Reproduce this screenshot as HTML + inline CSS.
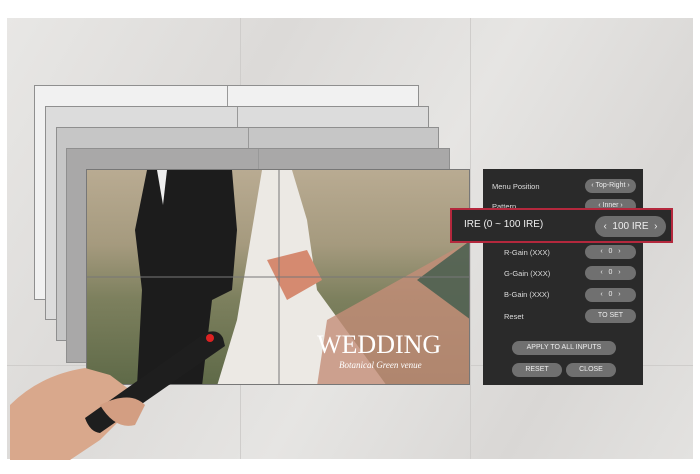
<!DOCTYPE html>
<html><head><style>
*{margin:0;padding:0;box-sizing:border-box}
body{width:700px;height:474px;background:#fff;position:relative;overflow:hidden;font-family:"Liberation Sans",sans-serif}
.bg{position:absolute;left:7px;top:18px;width:686px;height:441px;background:linear-gradient(120deg,#e8e7e5 0%,#dcdad8 30%,#e6e5e3 55%,#d9d7d5 80%,#e3e2e0 100%)}
.ln{position:absolute;background:#cfcdcb}
.p{position:absolute;border:1px solid #8f8f8f}
.p:after{content:"";position:absolute;left:50%;top:0;bottom:0;border-left:1px solid #999}
.photo{position:absolute;left:86px;top:169px;width:384px;height:216px;overflow:hidden;background:linear-gradient(180deg,#b9ab92 0%,#a59a7e 35%,#7d805e 60%,#5f6a48 100%);border:1px solid #777}
.menu{position:absolute;left:483px;top:169px;width:160px;height:216px;background:#2a2a2a;color:#ddd;font-size:7.5px}
.lab{position:absolute;left:9px}
.btn{position:absolute;left:102px;width:51px;height:14px;border-radius:7px;background:#707070;color:#eee;font-size:7px;text-align:center;line-height:14px}
.hl{position:absolute;left:450px;top:208px;width:223px;height:35px;border:2px solid #b4283d;background:#2a2a2a;color:#eee}
</style></head><body>
<div class="bg"></div>
<div class="ln" style="left:240px;top:18px;width:1px;height:441px"></div>
<div class="ln" style="left:470px;top:18px;width:1px;height:441px"></div>
<div class="ln" style="left:7px;top:365px;width:686px;height:1px"></div>
<div class="p" style="left:34px;top:85px;width:385px;height:215px;background:#f1f1f1"></div>
<div class="p" style="left:45px;top:106px;width:384px;height:214px;background:#dcdcdc"></div>
<div class="p" style="left:56px;top:127px;width:383px;height:214px;background:#c6c6c6"></div>
<div class="p" style="left:66px;top:148px;width:384px;height:215px;background:#a9a8a8"></div>
<div class="photo">
<svg width="384" height="216" style="position:absolute;left:0;top:0">
<path d="M60 0 L145 0 L150 60 L145 120 L125 130 L115 216 L50 216 L55 120 L48 60 Z" fill="#1c1c1c"/>
<path d="M70 0 L80 0 L76 35 Z" fill="#eee"/>
<path d="M175 0 L205 0 L220 50 L230 120 L300 216 L130 216 L150 150 L165 60 Z" fill="#ece9e4"/>
<path d="M180 90 L220 80 L235 110 L200 130 Z" fill="#d58a70"/>
<path d="M384 70 L384 216 L230 216 L240 150 Z" fill="#c48d78" opacity=".8"/>
<path d="M384 70 L384 150 L330 110 Z" fill="#3f5b4c" opacity=".8"/>
<line x1="192" y1="0" x2="192" y2="216" stroke="#777" stroke-width="1"/>
<line x1="0" y1="107" x2="384" y2="107" stroke="#777" stroke-width="1"/>
<text x="230" y="183" font-family="Liberation Serif" font-size="26" fill="#fff">WEDDING</text>
<text x="252" y="198" font-family="Liberation Serif" font-style="italic" font-size="9" fill="#fff">Botanical Green venue</text>
</svg></div>
<svg width="240" height="144" style="position:absolute;left:0;top:330px">
<path d="M10 130 L10 75 Q40 45 85 38 L110 45 L130 60 L140 70 L100 110 L70 130 Z" fill="#d9a88c"/>
<path d="M85 88 L205 3 Q218 -2 223 8 L225 16 L100 103 Q90 102 85 88 Z" fill="#1e1e1e"/>
<circle cx="210" cy="8" r="4" fill="#d22"/>
<path d="M100 75 Q130 60 145 75 L135 95 Q115 100 100 75 Z" fill="#d39e82"/>
</svg>
<div class="menu">
<div class="lab" style="top:13px">Menu Position</div><div class="btn" style="top:10px">‹ Top-Right ›</div>
<div class="lab" style="top:33px">Pattern</div><div class="btn" style="top:30px">‹ Inner ›</div>
<div class="lab" style="left:21px;top:79px">R-Gain (XXX)</div><div class="btn" style="top:76px">‹ &nbsp; 0 &nbsp; ›</div>
<div class="lab" style="left:21px;top:100px">G-Gain (XXX)</div><div class="btn" style="top:97px">‹ &nbsp; 0 &nbsp; ›</div>
<div class="lab" style="left:21px;top:121px">B-Gain (XXX)</div><div class="btn" style="top:119px">‹ &nbsp; 0 &nbsp; ›</div>
<div class="lab" style="left:21px;top:143px">Reset</div><div class="btn" style="top:140px">TO SET</div>
<div class="btn" style="left:29px;width:104px;top:172px">APPLY TO ALL INPUTS</div>
<div class="btn" style="left:29px;width:50px;top:194px">RESET</div>
<div class="btn" style="left:83px;width:50px;top:194px">CLOSE</div>
</div>
<div class="hl"><span style="position:absolute;left:12px;top:9px;font-size:10px">IRE (0 ~ 100 IRE)</span>
<div style="position:absolute;left:143px;top:6px;width:71px;height:21px;border-radius:11px;background:#6e6e6e;font-size:10px;text-align:center;line-height:21px">‹ &nbsp;100 IRE&nbsp; ›</div></div>
</body></html>
